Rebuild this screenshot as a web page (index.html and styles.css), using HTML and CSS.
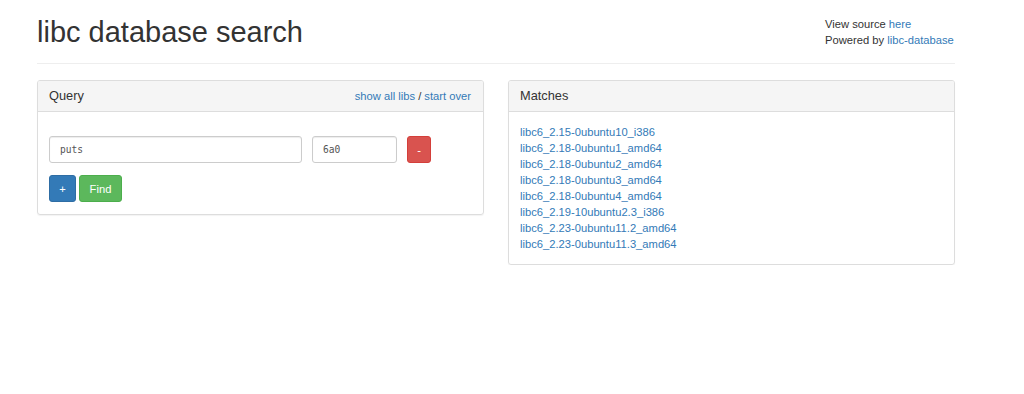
FILE: index.html
```html
<!DOCTYPE html>
<html>
<head>
    <title>libc database search</title>
    <link rel="stylesheet" href="styles.css">
</head>
<body>
    <div class="container">
        <div class="page-header">
            <h1>libc database search</h1>
            <div class="about">
                View source <a href="javascript:void(0)">here</a><br>
                Powered by <a href="javascript:void(0)">libc-database</a>
            </div>
        </div>
        <div class="row">
            <div class="panel">
                <div class="panel-heading">
                    <span class="panel-title">Query</span>
                    <span class="panel-links"><a href="javascript:void(0)">show all libs</a> / <a href="javascript:void(0)">start over</a></span>
                </div>
                <div class="panel-body query-body">
                    <div class="query-row">
                        <input class="form-control sym" type="text" value="puts">
                        <input class="form-control addr" type="text" value="6a0">
                        <button class="btn btn-danger btn-remove">-</button>
                    </div>
                    <div class="btn-row">
                        <button class="btn btn-primary btn-add">+</button>
                        <button class="btn btn-success btn-find">Find</button>
                    </div>
                </div>
            </div>
            <div class="panel">
                <div class="panel-heading">
                    <span class="panel-title">Matches</span>
                </div>
                <div class="panel-body">
                    <ul class="matches">
                        <li><a href="javascript:void(0)">libc6_2.15-0ubuntu10_i386</a></li>
                        <li><a href="javascript:void(0)">libc6_2.18-0ubuntu1_amd64</a></li>
                        <li><a href="javascript:void(0)">libc6_2.18-0ubuntu2_amd64</a></li>
                        <li><a href="javascript:void(0)">libc6_2.18-0ubuntu3_amd64</a></li>
                        <li><a href="javascript:void(0)">libc6_2.18-0ubuntu4_amd64</a></li>
                        <li><a href="javascript:void(0)">libc6_2.19-10ubuntu2.3_i386</a></li>
                        <li><a href="javascript:void(0)">libc6_2.23-0ubuntu11.2_amd64</a></li>
                        <li><a href="javascript:void(0)">libc6_2.23-0ubuntu11.3_amd64</a></li>
                    </ul>
                </div>
            </div>
        </div>
    </div>
</body>
</html>
```

FILE: styles.css
```css
* {
    margin: 0;
    padding: 0;
    box-sizing: border-box;
}

body {
    background: #fff;
    color: #333;
    font-family: "Liberation Sans", Arial, sans-serif;
    font-size: 11.2px;
    line-height: 16px;
}

a {
    color: #337ab7;
    text-decoration: none;
}

.container {
    width: 918px;
    margin-left: 37px;
    padding-top: 16px;
}

.page-header {
    display: flex;
    justify-content: space-between;
    align-items: flex-start;
    padding-bottom: 7px;
    border-bottom: 1px solid #eee;
    margin-bottom: 16px;
}

.page-header h1 {
    font-size: 29px;
    font-weight: 400;
    line-height: 32px;
    margin-bottom: 8px;
}

.about {
    width: 130px;
}

.row {
    display: grid;
    grid-template-columns: 1fr 1fr;
    gap: 24px;
    align-items: start;
}

.panel {
    border: 1px solid #ddd;
    border-radius: 3px;
    box-shadow: 0 1px 1px rgba(0, 0, 0, .05);
}

.panel-heading {
    display: flex;
    justify-content: space-between;
    align-items: center;
    height: 31px;
    padding: 0 12px 0 11px;
    background: #f5f5f5;
    border-bottom: 1px solid #ddd;
    border-radius: 2px 2px 0 0;
}

.panel-title {
    font-size: 12.8px;
}

.panel-body {
    padding: 12px 12px 12px 11px;
}

.query-body {
    padding-top: 24px;
}

.query-row {
    display: flex;
    gap: 10px;
    margin-bottom: 12px;
}

.form-control {
    height: 27px;
    padding: 0 10px;
    border: 1px solid #ccc;
    border-radius: 3px;
    font-family: "DejaVu Sans Mono", monospace;
    font-size: 9.6px;
    color: #555;
    box-shadow: inset 0 1px 1px rgba(0, 0, 0, .075);
}

.sym {
    width: 253px;
}

.addr {
    width: 85px;
}

.btn-row {
    display: flex;
    gap: 3px;
}

.btn {
    height: 27px;
    border: 1px solid transparent;
    border-radius: 3px;
    color: #fff;
    font-family: "Liberation Sans", Arial, sans-serif;
    font-size: 11.2px;
}

.btn-danger {
    background: #d9534f;
    border-color: #d43f3a;
    width: 24px;
}

.btn-primary {
    background: #337ab7;
    border-color: #2e6da4;
    width: 27px;
}

.btn-success {
    background: #5cb85c;
    border-color: #4cae4c;
    width: 43px;
}

.matches {
    list-style: none;
}
```
